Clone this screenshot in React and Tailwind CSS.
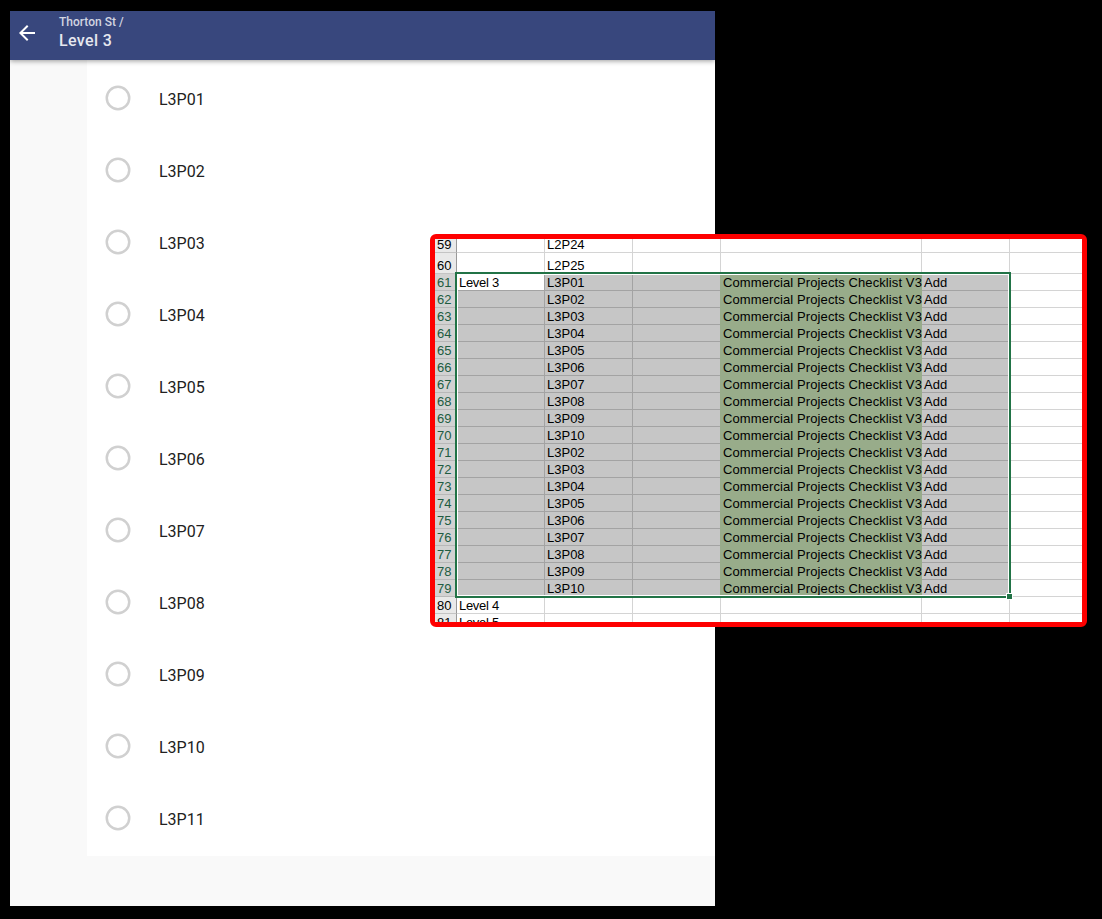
import React from 'react';

const points = ['L3P01', 'L3P02', 'L3P03', 'L3P04', 'L3P05', 'L3P06', 'L3P07', 'L3P08', 'L3P09', 'L3P10', 'L3P11'];

const selected = [
  'L3P01', 'L3P02', 'L3P03', 'L3P04', 'L3P05', 'L3P06', 'L3P07', 'L3P08', 'L3P09', 'L3P10',
  'L3P02', 'L3P03', 'L3P04', 'L3P05', 'L3P06', 'L3P07', 'L3P08', 'L3P09', 'L3P10',
].map((code, i) => ({ n: 61 + i, a: i === 0 ? 'Level 3' : '', b: code, sel: true }));

const rows = [
  { n: 59, a: '', b: 'L2P24', size: 'h-[14px]' },
  { n: 60, a: '', b: 'L2P25', size: 'h-[21px]' },
  ...selected,
  { n: 80, a: 'Level 4', b: '' },
  { n: 81, a: 'Level 5', b: '' },
];

function Header() {
  return (
    <header className="relative z-10 flex h-[49px] shrink-0 items-start bg-[#38477d] shadow-[0_1px_5px_rgba(0,0,0,0.4)]">
      <svg className="mt-[10px] ml-[5px] size-6 shrink-0" viewBox="0 0 24 24" fill="#fff">
        <path d="M20 11H7.83l5.59-5.59L12 4l-8 8 8 8 1.41-1.41L7.83 13H20v-2z" />
      </svg>
      <div className="ml-5 flex flex-col pt-[3px] font-medium">
        <span className="text-xs leading-4 text-[#d2d5e1]">Thorton St /</span>
        <span className="text-base leading-[22px] tracking-[0.35px] text-[#e6e8ef]">Level 3</span>
      </div>
    </header>
  );
}

function PointList() {
  return (
    <ul className="ml-[77px] h-[796px] bg-white pt-[2px]">
      {points.map((p) => (
        <li key={p} className="flex h-[72px] items-center pl-[18px]">
          <svg className="size-[26px] shrink-0" viewBox="0 0 26 26" fill="none" stroke="#d0d0d0" strokeWidth="2.5">
            <circle cx="13" cy="13" r="11.25" />
          </svg>
          <span className="ml-7 pt-1 text-base leading-6 text-[#212121]">{p}</span>
        </li>
      ))}
    </ul>
  );
}

function Row({ row }) {
  const { n, a, b, sel } = row;
  const size = row.size || 'h-[17px]';
  const line = sel ? 'border-[#a3a3a3] bg-[#c6c6c6]' : 'border-[#d4d4d4] bg-white';
  const cell = `border-r border-b pl-[2px] ${line}`;
  const text = 'flex items-end whitespace-nowrap';
  return (
    <div className={`grid shrink-0 grid-cols-[22px_88px_88px_88px_201px_88px_72px] grid-rows-[100%] leading-[14px] ${size}`}>
      <div
        className={`border-r border-b border-r-[#999] pl-[2px] ${text} ${
          sel ? 'border-b-[#b8b8b8] bg-[#d2d2d2] text-[#215c41]' : 'border-b-[#c4c4c4] bg-[#e9e9e9]'
        }`}
      >
        {n}
      </div>
      <div
        className={
          n === 61
            ? 'flex items-end border-r border-b border-r-[#a3a3a3] border-b-[#a3a3a3] bg-white pl-[2px] tracking-[-0.3px] whitespace-nowrap'
            : `${cell} flex items-end tracking-[-0.3px] whitespace-nowrap`
        }
      >
        {a}
      </div>
      <div className={`${cell} ${text}`}>{b}</div>
      <div className={sel ? 'border-b border-[#a3a3a3] bg-[#c6c6c6]' : cell} />
      <div
        className={
          sel
            ? '-ml-px flex items-end overflow-hidden border-l border-[#98ac8a] bg-[#98ac8a] pb-px pl-[2px] tracking-[0.1px] whitespace-nowrap'
            : cell
        }
      >
        {sel && 'Commercial Projects Checklist V3'}
      </div>
      <div className={`${cell} ${text}`}>{sel && 'Add'}</div>
      <div className="border-b border-[#d4d4d4] bg-white" />
    </div>
  );
}

function Sheet() {
  return (
    <section className="absolute top-[234px] left-[430px] z-20 h-[393px] w-[657px] rounded-[6px] border-[5px] border-[#fe0000] bg-[#fe0000]">
      <div className="relative flex h-full flex-col overflow-hidden font-['Liberation_Sans',sans-serif] text-[13px] text-black">
        {rows.map((r) => (
          <Row key={r.n} row={r} />
        ))}
        <div className="absolute top-[33px] left-[20px] h-[326px] w-[556px] border-2 border-[#217346]">
          <div className="h-full w-full border border-white" />
        </div>
        <div className="absolute top-[354px] left-[571px] size-[7px] border border-white bg-[#217346]" />
      </div>
    </section>
  );
}

export default function App() {
  return (
    <main className="relative h-[919px] w-[1102px] overflow-hidden bg-black pt-[11px] pl-[10px] font-[Roboto,sans-serif]">
      <div className="flex h-[895px] w-[705px] flex-col overflow-hidden bg-[#f9f9f9]">
        <Header />
        <PointList />
      </div>
      <Sheet />
    </main>
  );
}
